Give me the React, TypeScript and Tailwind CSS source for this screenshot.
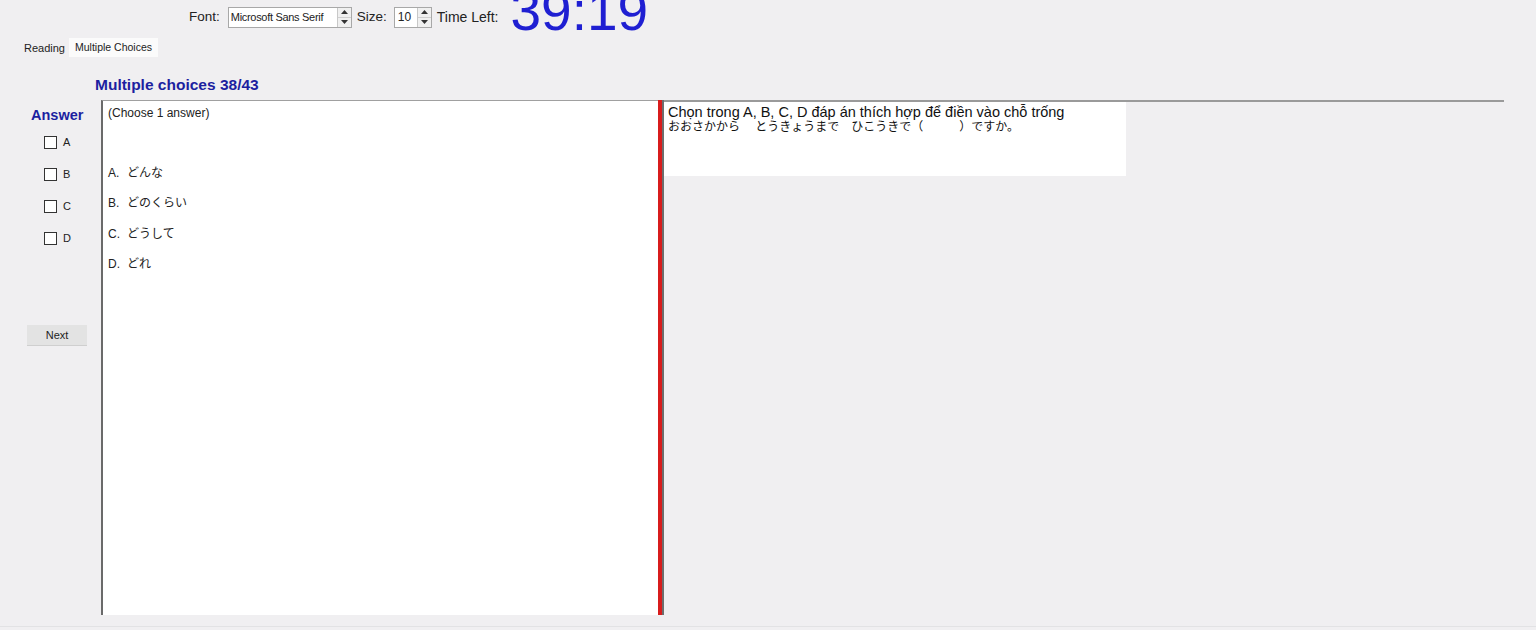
import React from "react";

const sans = "font-['Liberation_Sans',Arial,sans-serif]";
const jp = "font-['Liberation_Sans','Noto_Sans_CJK_JP',sans-serif]";

const Spinner: React.FC = () => (
  <div className="flex flex-col w-[14px] h-[19px] border-l border-[#c8c8c8] bg-[#f0f0f0]">
    <div className="flex-1 flex items-center justify-center border-b border-[#d0d0d0]">
      <svg width="7" height="4" viewBox="0 0 7 4">
        <path d="M0 4 L3.5 0 L7 4 Z" fill="#333" />
      </svg>
    </div>
    <div className="flex-1 flex items-center justify-center">
      <svg width="7" height="4" viewBox="0 0 7 4">
        <path d="M0 0 L3.5 4 L7 0 Z" fill="#333" />
      </svg>
    </div>
  </div>
);

const Check: React.FC<{ label: string }> = ({ label }) => (
  <div className="h-[32px] flex items-center pl-[44px]">
    <div className="w-[13px] h-[13px] border border-[#333] bg-white" />
    <span className="ml-[6px] text-[11px] text-[#222]">{label}</span>
  </div>
);

const options = [
  { k: "A.", v: "どんな" },
  { k: "B.", v: "どのくらい" },
  { k: "C.", v: "どうして" },
  { k: "D.", v: "どれ" },
];

export default function App() {
  return (
    <div className={`w-[1536px] h-[630px] overflow-hidden bg-[#f0eff1] text-black ${sans}`}>
      {/* top bar */}
      <div className="h-[34px] flex items-center pl-[189px] text-[13.5px] text-[#222]">
        <span>Font:</span>
        <div className="ml-[8px] w-[124px] h-[21px] flex items-center justify-between border border-[#a8a8a8] bg-white">
          <span className="pl-[2px] text-[11px] tracking-[-0.3px]">Microsoft Sans Serif</span>
          <Spinner />
        </div>
        <span className="ml-[5px]">Size:</span>
        <div className="ml-[7px] w-[38px] h-[21px] flex items-center justify-between border border-[#a8a8a8] bg-white">
          <span className="pl-[3px] text-[12px]">10</span>
          <Spinner />
        </div>
        <span className="ml-[5px] text-[14px]">Time Left:</span>
        <span className="ml-[12px] self-start -mt-[16px] text-[55px] leading-none text-[#1f1fd2]">39:19</span>
      </div>

      {/* tabs */}
      <div className="mt-[4px] h-[19px] flex items-end pl-[24px]">
        <span className="text-[11px] leading-[16px] pb-[1px] text-[#222]">Reading</span>
        <div className="ml-[4px] h-[19px] px-[6px] bg-[#fbfbfb] flex items-center">
          <span className="text-[10.5px] text-[#222]">Multiple Choices</span>
        </div>
      </div>

      {/* heading */}
      <div className="h-[43px] pt-[16px] pl-[95px]">
        <span className="text-[15.5px] leading-[20px] font-bold text-[#1c1fa0]">Multiple choices 38/43</span>
      </div>

      {/* body */}
      <div className="flex">
        <div className="w-[101px] flex flex-col">
          <div className="mt-[5px] pl-[31px] text-[14.5px] leading-[20px] font-bold text-[#1c1fa0]">Answer</div>
          <div className="mt-[1px]">
            <Check label="A" />
            <Check label="B" />
            <Check label="C" />
            <Check label="D" />
          </div>
          <div className="mt-[71px] ml-[27px] w-[60px] h-[21px] bg-[#e3e3e3] border-b border-[#cfcfcf] flex items-center justify-center text-[11px] text-[#222]">
            Next
          </div>
        </div>

        <div className="w-[557px] h-[515px] bg-white border-l-2 border-t border-l-[#6a6a6a] border-t-[#a0a0a0] pl-[5px] pt-[4px]">
          <div className="text-[12px] leading-[16px] text-[#222]">(Choose 1 answer)</div>
          <div className="mt-[37px]">
            {options.map((o) => (
              <div key={o.k} className={`h-[30.3px] flex items-center text-[12px] text-[#222] ${jp}`}>
                <span className="w-[19px]">{o.k}</span>
                <span>{o.v}</span>
              </div>
            ))}
          </div>
        </div>

        <div className="w-[4px] h-[515px] bg-[#d81c1c]" />

        <div className="w-[842px] h-[515px] border-l-2 border-[#6d6d6d] flex flex-col">
          <div className="h-[2px] bg-[#9a9a9a]" />
          <div className="w-[462px] h-[74px] bg-white pl-[4px] pt-[3px] text-[#111]">
            <div className="text-[14.5px] leading-[15px]">Chọn trong A, B, C, D đáp án thích hợp để điền vào chỗ trống</div>
            <div className={`text-[12px] leading-[15px] ${jp}`}>
              おおさかから　 とうきょうまで　ひこうきで（　　　）ですか。
            </div>
          </div>
        </div>
      </div>

      <div className="h-[12px] border-b border-[#e2e2e4]" />
    </div>
  );
}
